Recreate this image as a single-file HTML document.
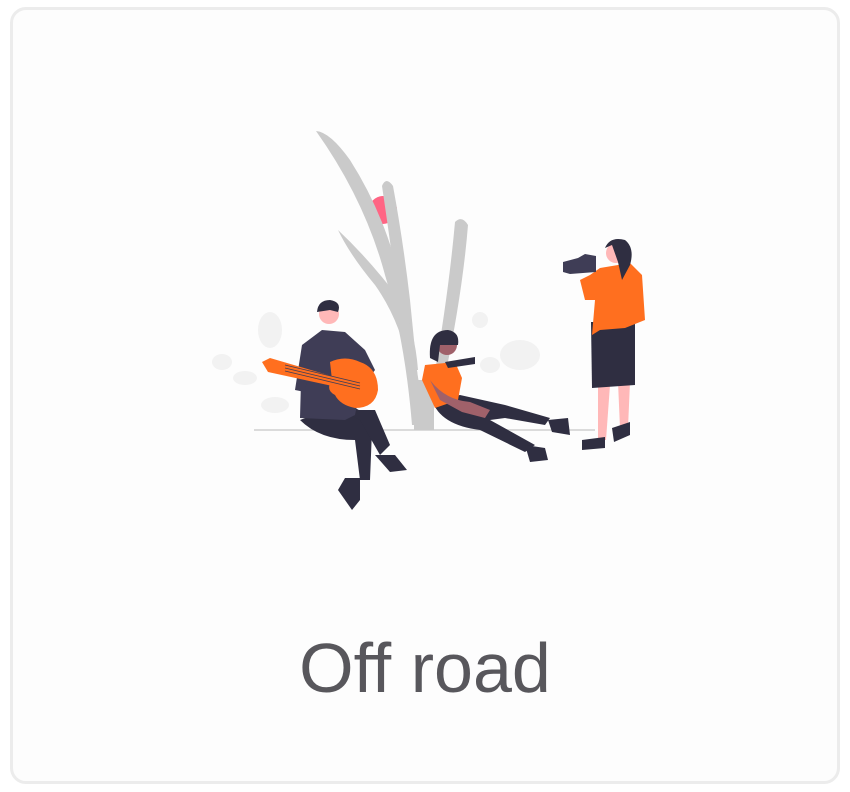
<!DOCTYPE html>
<html><head><style>
html,body{margin:0;padding:0;background:#fff;}
.card{position:absolute;left:10px;top:7px;width:830px;height:777px;border:3px solid #ececec;border-radius:16px;background:#fdfdfd;box-sizing:border-box;}
.t{position:absolute;left:0;width:850px;top:628px;text-align:center;font-family:"Liberation Sans",sans-serif;font-size:70px;color:#58575c;line-height:80px;}
svg{position:absolute;left:0;top:0;}
</style></head><body>
<div class="card"></div>
<svg width="850" height="792" viewBox="0 0 850 792">
<g fill="#f2f2f2">
<ellipse cx="222" cy="362" rx="10" ry="8"/><ellipse cx="270" cy="330" rx="12" ry="18"/><ellipse cx="275" cy="405" rx="14" ry="8"/><ellipse cx="245" cy="378" rx="12" ry="7"/>
<ellipse cx="480" cy="320" rx="8" ry="8"/><ellipse cx="520" cy="355" rx="20" ry="15"/><ellipse cx="490" cy="365" rx="10" ry="8"/>
</g>
<line x1="254" y1="430" x2="595" y2="430" stroke="#d0d0d0" stroke-width="1.5"/>
<circle cx="383" cy="210" r="14" fill="#ff6584"/>
<g fill="#cacaca">
<path d="M316 131 Q330 132 350 160 Q385 215 400 280 Q415 350 425 425 L412 425 Q405 340 385 275 Q365 200 316 131 Z"/>
<path d="M382 186 Q386 176 393 186 Q403 240 410 300 Q416 360 422 420 L414 420 Q405 350 398 300 Q390 240 382 186 Z"/>
<path d="M455 222 Q462 215 468 225 Q462 300 440 400 L430 400 Q448 300 455 222 Z"/>
<path d="M338 230 Q370 260 400 300 Q415 330 418 370 L410 370 Q400 320 375 285 Q350 255 338 230 Z"/>
</g>
<rect x="414" y="380" width="20" height="50" fill="#cacaca"/>
<!-- guitar man -->
<path d="M300 420 Q320 440 355 440 L360 480 L370 480 L372 430 Q365 405 340 405 Z" fill="#2f2e41"/>
<path d="M340 410 L375 410 L390 445 L380 455 L360 420 Z" fill="#2f2e41"/>
<path d="M345 478 L360 478 L360 500 L352 510 L338 490 Z" fill="#2f2e41"/>
<path d="M375 455 L395 455 L407 470 L390 472 Z" fill="#2f2e41"/>
<path d="M302 345 L322 330 L345 332 L365 350 L375 370 L360 390 L355 415 L345 420 L300 418 Z" fill="#3f3d56"/>
<path d="M302 345 L295 390 L305 392 L310 360 Z" fill="#3f3d56"/>
<circle cx="329" cy="314" r="10" fill="#ffb8b8"/>
<path d="M317 312 Q318 300 330 300 Q342 302 338 312 L330 310 Z" fill="#2f2e41"/>
<path d="M262 362 L270 358 L362 385 L360 392 L268 372 Z" fill="#ff6f1f"/>
<path d="M330 362 Q345 355 360 362 Q378 368 378 390 Q375 408 355 408 Q340 405 335 395 Q325 390 332 380 Z" fill="#ff6f1f"/>
<g stroke="#3f3d56" stroke-width="0.8"><line x1="285" y1="365" x2="360" y2="383"/><line x1="285" y1="368" x2="360" y2="386"/><line x1="285" y1="371" x2="360" y2="389"/></g>
<!-- sitting woman -->
<path d="M432 400 Q440 425 480 430 L525 452 L535 445 L490 420 L505 418 L545 425 L550 418 L505 405 L460 395 Z" fill="#2f2e41"/>
<path d="M525 445 L545 448 L548 460 L530 462 Z" fill="#2f2e41"/>
<path d="M548 420 L568 418 L570 435 L552 432 Z" fill="#2f2e41"/>
<path d="M425 365 L455 362 L462 378 L458 400 L435 408 L422 380 Z" fill="#ff6f1f"/>
<path d="M430 380 Q445 400 470 402 L490 410 L485 418 L462 412 L440 400 Z" fill="#a0616a"/>
<circle cx="447" cy="345" r="10" fill="#a0616a"/>
<path d="M430 358 Q428 330 448 330 Q460 332 458 345 L440 345 L438 362 Z" fill="#2f2e41"/>
<path d="M445 362 L475 357 L475 364 L448 368 Z" fill="#2f2e41"/>
<!-- photographer -->
<path d="M598 385 L610 385 L606 440 L598 440 Z" fill="#ffb8b8"/>
<path d="M618 382 L630 382 L628 428 L620 428 Z" fill="#ffb8b8"/>
<path d="M582 440 L605 437 L605 448 L582 450 Z" fill="#2f2e41"/>
<path d="M612 428 L630 422 L630 435 L614 442 Z" fill="#2f2e41"/>
<path d="M591 322 L635 322 L635 385 L592 388 Z" fill="#2f2e41"/>
<path d="M600 268 L630 263 L642 275 L645 320 L625 328 L600 330 L592 335 L595 300 L585 300 L580 280 L590 275 Z" fill="#ff6f1f"/>
<circle cx="616" cy="253" r="10" fill="#ffb8b8"/>
<path d="M605 248 Q610 236 625 240 Q635 248 630 265 L622 280 L618 262 L612 245 Z" fill="#2f2e41"/>
<path d="M563 262 L578 258 L585 254 L596 256 L596 272 L570 274 L563 272 Z" fill="#3f3d56"/>
</svg>
<div class="t">Off road</div>
</body></html>
